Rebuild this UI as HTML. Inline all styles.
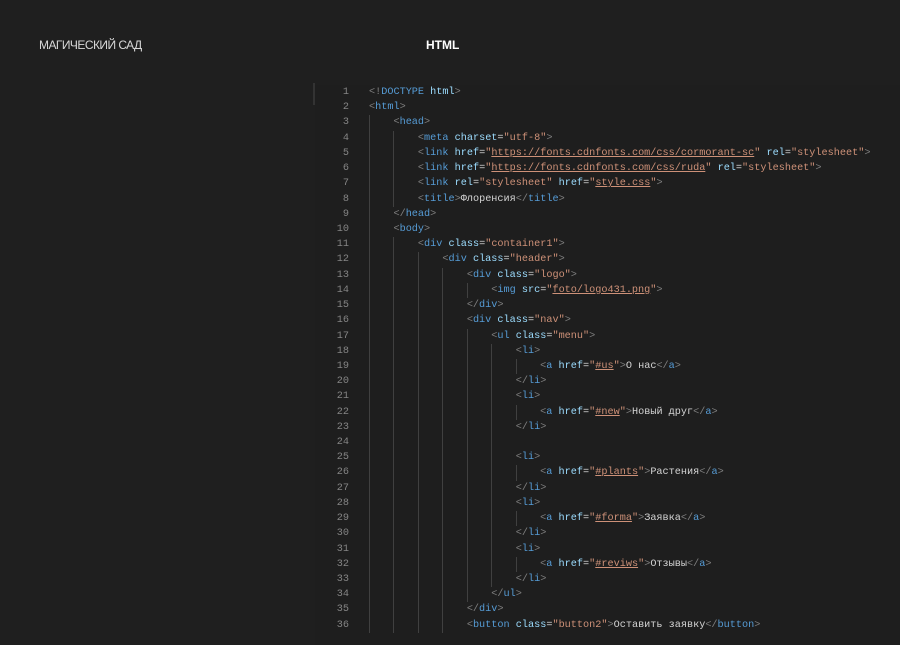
<!DOCTYPE html>
<html><head><meta charset="utf-8"><style>
body{margin:0;width:900px;height:635px;background:#1f1f1f;overflow:hidden;position:relative;font-family:"Liberation Sans","DejaVu Sans",sans-serif}
.logo{position:absolute;left:39px;top:38px;color:#d8d8d8;font-size:12px;letter-spacing:-0.55px}
.ttl{position:absolute;left:426px;top:38px;color:#fff;font-size:12px;font-weight:bold}
.bar{position:absolute;left:313px;top:83px;width:2px;height:22px;background:#333}
.code{position:absolute;left:315px;top:85px;width:585px;height:560px;background:#1e1e1e;font-family:"Liberation Mono",monospace;font-size:10.2px;line-height:15.22px;color:#d4d4d4}
.l{white-space:pre;height:15.22px;position:relative;padding-left:54px}
.n{position:absolute;left:0;width:34px;text-align:right;color:#858585}
.i{display:inline-block;width:4ch;border-left:1px solid #404040;box-sizing:border-box;height:15.22px;vertical-align:top}
.b{color:#808080}.t{color:#569cd6}.a{color:#9cdcfe}.s{color:#ce9178}.u{text-decoration:underline;text-decoration-color:#ce9178}
</style></head><body>
<div class="logo">МАГИЧЕСКИЙ САД</div>
<div class="ttl">HTML</div>
<div class="code">
<div class="l"><span class="n">1</span><span class="b">&lt;!</span><span class="t">DOCTYPE</span> <span class="a">html</span><span class="b">&gt;</span></div>
<div class="l"><span class="n">2</span><span class="b">&lt;</span><span class="t">html</span><span class="b">&gt;</span></div>
<div class="l"><span class="n">3</span><span class="i"></span><span class="b">&lt;</span><span class="t">head</span><span class="b">&gt;</span></div>
<div class="l"><span class="n">4</span><span class="i"></span><span class="i"></span><span class="b">&lt;</span><span class="t">meta</span> <span class="a">charset</span>=<span class="s">"utf-8"</span><span class="b">&gt;</span></div>
<div class="l"><span class="n">5</span><span class="i"></span><span class="i"></span><span class="b">&lt;</span><span class="t">link</span> <span class="a">href</span>=<span class="s">"<span class="u">https://fonts.cdnfonts.com/css/cormorant-sc</span>"</span> <span class="a">rel</span>=<span class="s">"stylesheet"</span><span class="b">&gt;</span></div>
<div class="l"><span class="n">6</span><span class="i"></span><span class="i"></span><span class="b">&lt;</span><span class="t">link</span> <span class="a">href</span>=<span class="s">"<span class="u">https://fonts.cdnfonts.com/css/ruda</span>"</span> <span class="a">rel</span>=<span class="s">"stylesheet"</span><span class="b">&gt;</span></div>
<div class="l"><span class="n">7</span><span class="i"></span><span class="i"></span><span class="b">&lt;</span><span class="t">link</span> <span class="a">rel</span>=<span class="s">"stylesheet"</span> <span class="a">href</span>=<span class="s">"<span class="u">style.css</span>"</span><span class="b">&gt;</span></div>
<div class="l"><span class="n">8</span><span class="i"></span><span class="i"></span><span class="b">&lt;</span><span class="t">title</span><span class="b">&gt;</span>Флоренсия<span class="b">&lt;/</span><span class="t">title</span><span class="b">&gt;</span></div>
<div class="l"><span class="n">9</span><span class="i"></span><span class="b">&lt;/</span><span class="t">head</span><span class="b">&gt;</span></div>
<div class="l"><span class="n">10</span><span class="i"></span><span class="b">&lt;</span><span class="t">body</span><span class="b">&gt;</span></div>
<div class="l"><span class="n">11</span><span class="i"></span><span class="i"></span><span class="b">&lt;</span><span class="t">div</span> <span class="a">class</span>=<span class="s">"container1"</span><span class="b">&gt;</span></div>
<div class="l"><span class="n">12</span><span class="i"></span><span class="i"></span><span class="i"></span><span class="b">&lt;</span><span class="t">div</span> <span class="a">class</span>=<span class="s">"header"</span><span class="b">&gt;</span></div>
<div class="l"><span class="n">13</span><span class="i"></span><span class="i"></span><span class="i"></span><span class="i"></span><span class="b">&lt;</span><span class="t">div</span> <span class="a">class</span>=<span class="s">"logo"</span><span class="b">&gt;</span></div>
<div class="l"><span class="n">14</span><span class="i"></span><span class="i"></span><span class="i"></span><span class="i"></span><span class="i"></span><span class="b">&lt;</span><span class="t">img</span> <span class="a">src</span>=<span class="s">"<span class="u">foto/logo431.png</span>"</span><span class="b">&gt;</span></div>
<div class="l"><span class="n">15</span><span class="i"></span><span class="i"></span><span class="i"></span><span class="i"></span><span class="b">&lt;/</span><span class="t">div</span><span class="b">&gt;</span></div>
<div class="l"><span class="n">16</span><span class="i"></span><span class="i"></span><span class="i"></span><span class="i"></span><span class="b">&lt;</span><span class="t">div</span> <span class="a">class</span>=<span class="s">"nav"</span><span class="b">&gt;</span></div>
<div class="l"><span class="n">17</span><span class="i"></span><span class="i"></span><span class="i"></span><span class="i"></span><span class="i"></span><span class="b">&lt;</span><span class="t">ul</span> <span class="a">class</span>=<span class="s">"menu"</span><span class="b">&gt;</span></div>
<div class="l"><span class="n">18</span><span class="i"></span><span class="i"></span><span class="i"></span><span class="i"></span><span class="i"></span><span class="i"></span><span class="b">&lt;</span><span class="t">li</span><span class="b">&gt;</span></div>
<div class="l"><span class="n">19</span><span class="i"></span><span class="i"></span><span class="i"></span><span class="i"></span><span class="i"></span><span class="i"></span><span class="i"></span><span class="b">&lt;</span><span class="t">a</span> <span class="a">href</span>=<span class="s">"<span class="u">#us</span>"</span><span class="b">&gt;</span>О нас<span class="b">&lt;/</span><span class="t">a</span><span class="b">&gt;</span></div>
<div class="l"><span class="n">20</span><span class="i"></span><span class="i"></span><span class="i"></span><span class="i"></span><span class="i"></span><span class="i"></span><span class="b">&lt;/</span><span class="t">li</span><span class="b">&gt;</span></div>
<div class="l"><span class="n">21</span><span class="i"></span><span class="i"></span><span class="i"></span><span class="i"></span><span class="i"></span><span class="i"></span><span class="b">&lt;</span><span class="t">li</span><span class="b">&gt;</span></div>
<div class="l"><span class="n">22</span><span class="i"></span><span class="i"></span><span class="i"></span><span class="i"></span><span class="i"></span><span class="i"></span><span class="i"></span><span class="b">&lt;</span><span class="t">a</span> <span class="a">href</span>=<span class="s">"<span class="u">#new</span>"</span><span class="b">&gt;</span>Новый друг<span class="b">&lt;/</span><span class="t">a</span><span class="b">&gt;</span></div>
<div class="l"><span class="n">23</span><span class="i"></span><span class="i"></span><span class="i"></span><span class="i"></span><span class="i"></span><span class="i"></span><span class="b">&lt;/</span><span class="t">li</span><span class="b">&gt;</span></div>
<div class="l"><span class="n">24</span><span class="i"></span><span class="i"></span><span class="i"></span><span class="i"></span><span class="i"></span><span class="i"></span></div>
<div class="l"><span class="n">25</span><span class="i"></span><span class="i"></span><span class="i"></span><span class="i"></span><span class="i"></span><span class="i"></span><span class="b">&lt;</span><span class="t">li</span><span class="b">&gt;</span></div>
<div class="l"><span class="n">26</span><span class="i"></span><span class="i"></span><span class="i"></span><span class="i"></span><span class="i"></span><span class="i"></span><span class="i"></span><span class="b">&lt;</span><span class="t">a</span> <span class="a">href</span>=<span class="s">"<span class="u">#plants</span>"</span><span class="b">&gt;</span>Растения<span class="b">&lt;/</span><span class="t">a</span><span class="b">&gt;</span></div>
<div class="l"><span class="n">27</span><span class="i"></span><span class="i"></span><span class="i"></span><span class="i"></span><span class="i"></span><span class="i"></span><span class="b">&lt;/</span><span class="t">li</span><span class="b">&gt;</span></div>
<div class="l"><span class="n">28</span><span class="i"></span><span class="i"></span><span class="i"></span><span class="i"></span><span class="i"></span><span class="i"></span><span class="b">&lt;</span><span class="t">li</span><span class="b">&gt;</span></div>
<div class="l"><span class="n">29</span><span class="i"></span><span class="i"></span><span class="i"></span><span class="i"></span><span class="i"></span><span class="i"></span><span class="i"></span><span class="b">&lt;</span><span class="t">a</span> <span class="a">href</span>=<span class="s">"<span class="u">#forma</span>"</span><span class="b">&gt;</span>Заявка<span class="b">&lt;/</span><span class="t">a</span><span class="b">&gt;</span></div>
<div class="l"><span class="n">30</span><span class="i"></span><span class="i"></span><span class="i"></span><span class="i"></span><span class="i"></span><span class="i"></span><span class="b">&lt;/</span><span class="t">li</span><span class="b">&gt;</span></div>
<div class="l"><span class="n">31</span><span class="i"></span><span class="i"></span><span class="i"></span><span class="i"></span><span class="i"></span><span class="i"></span><span class="b">&lt;</span><span class="t">li</span><span class="b">&gt;</span></div>
<div class="l"><span class="n">32</span><span class="i"></span><span class="i"></span><span class="i"></span><span class="i"></span><span class="i"></span><span class="i"></span><span class="i"></span><span class="b">&lt;</span><span class="t">a</span> <span class="a">href</span>=<span class="s">"<span class="u">#reviws</span>"</span><span class="b">&gt;</span>Отзывы<span class="b">&lt;/</span><span class="t">a</span><span class="b">&gt;</span></div>
<div class="l"><span class="n">33</span><span class="i"></span><span class="i"></span><span class="i"></span><span class="i"></span><span class="i"></span><span class="i"></span><span class="b">&lt;/</span><span class="t">li</span><span class="b">&gt;</span></div>
<div class="l"><span class="n">34</span><span class="i"></span><span class="i"></span><span class="i"></span><span class="i"></span><span class="i"></span><span class="b">&lt;/</span><span class="t">ul</span><span class="b">&gt;</span></div>
<div class="l"><span class="n">35</span><span class="i"></span><span class="i"></span><span class="i"></span><span class="i"></span><span class="b">&lt;/</span><span class="t">div</span><span class="b">&gt;</span></div>
<div class="l"><span class="n">36</span><span class="i"></span><span class="i"></span><span class="i"></span><span class="i"></span><span class="b">&lt;</span><span class="t">button</span> <span class="a">class</span>=<span class="s">"button2"</span><span class="b">&gt;</span>Оставить заявку<span class="b">&lt;/</span><span class="t">button</span><span class="b">&gt;</span></div>
</div>
<div class="bar"></div>
</body></html>
